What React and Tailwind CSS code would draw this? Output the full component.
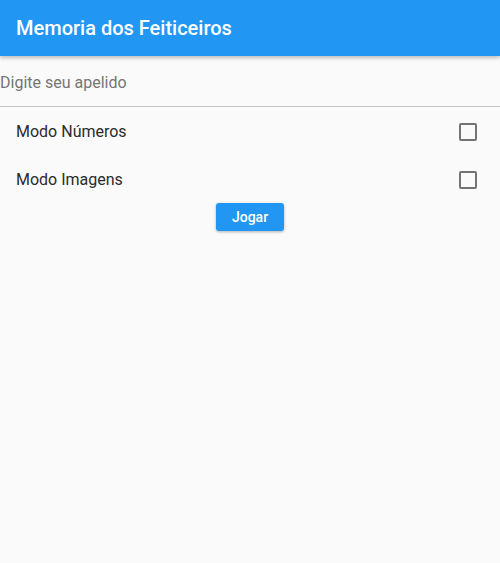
import React, { useState } from 'react';

const font = { fontFamily: 'Roboto, "Liberation Sans", sans-serif' };

function Check({ checked, onChange }) {
  return (
    <button onClick={onChange} className="w-[18px] h-[18px] border-2 border-[#737373] rounded-[2px] flex items-center justify-center">
      {checked && <span className="text-[12px] leading-none text-[#737373]">✓</span>}
    </button>
  );
}

export default function App() {
  const [nums, setNums] = useState(false);
  const [imgs, setImgs] = useState(false);

  return (
    <div className="w-[500px] h-[563px] bg-[#fafafa] flex flex-col" style={font}>
      {/* App bar */}
      <div className="h-14 bg-[#2196f3] flex items-center px-4 shadow-[0_2px_4px_rgba(0,0,0,0.25)] relative z-10">
        <h1 className="text-[20px] text-white font-medium leading-none">Memoria dos Feiticeiros</h1>
      </div>

      {/* Nickname field */}
      <div className="h-[51px] flex items-center pt-1 border-b-[1.5px] border-[#c4c4c4]">
        <input
          placeholder="Digite seu apelido"
          className="w-full bg-transparent outline-none text-[16px] text-[#212121] placeholder:text-[#757575]"
        />
      </div>

      {/* Modes */}
      <div className="pt-[1px]">
        <div className="h-12 flex items-center justify-between pl-4 pr-[23px]">
          <span className="text-[16px] text-[#2b2b2b]">Modo Números</span>
          <Check checked={nums} onChange={() => setNums(!nums)} />
        </div>
        <div className="h-12 flex items-center justify-between pl-4 pr-[23px]">
          <span className="text-[16px] text-[#2b2b2b]">Modo Imagens</span>
          <Check checked={imgs} onChange={() => setImgs(!imgs)} />
        </div>
      </div>

      <div className="flex justify-center -mt-[1px]">
        <button className="w-[68px] h-[28px] bg-[#2196f3] text-white text-[14px] font-medium rounded-[3px] shadow-[0_1px_3px_rgba(0,0,0,0.3)]">
          Jogar
        </button>
      </div>
    </div>
  );
}
